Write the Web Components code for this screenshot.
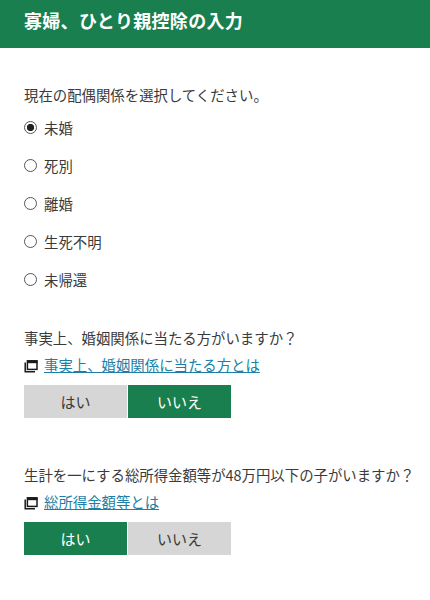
<!DOCTYPE html>
<html lang="ja">
<head>
<meta charset="utf-8">
<title>寡婦、ひとり親控除の入力</title>
<style>
  html, body { margin: 0; padding: 0; background: #fff; }
  body {
    font-family: "Noto Sans CJK JP", "Noto Sans", sans-serif;
    font-size: 14.4px;
    color: #3a3a3a;
  }
  main { display: block; padding: 0 8px 0 24px; }
</style>
</head>
<body>
<page-header>寡婦、ひとり親控除の入力</page-header>
<main>
  <radio-group prompt="現在の配偶関係を選択してください。" options="未婚,死別,離婚,生死不明,未帰還" selected="0"></radio-group>
  <yes-no prompt="事実上、婚姻関係に当たる方がいますか？" link="事実上、婚姻関係に当たる方とは" value="no" style="margin-top:38px"></yes-no>
  <yes-no prompt="生計を一にする総所得金額等が48万円以下の子がいますか？" link="総所得金額等とは" value="yes" style="margin-top:47px"></yes-no>
</main>
<script>
class PageHeader extends HTMLElement {
  constructor() {
    super();
    this.attachShadow({mode: 'open'}).innerHTML = `
      <style>
        :host {
          display: flex;
          align-items: center;
          height: 48px;
          padding: 0 24px 8px;
          box-sizing: border-box;
          background: #1a7f4e;
          color: #fff;
          font-size: 18px;
          font-weight: 700;
          letter-spacing: 0.3px;
        }
      </style>
      <slot></slot>`;
  }
}

class RadioGroup extends HTMLElement {
  constructor() {
    super();
    const root = this.attachShadow({mode: 'open'});
    const selected = Number(this.getAttribute('selected'));
    const items = this.getAttribute('options').split(',').map((name, i) => `
      <label>
        <input type="radio" name="g" ${i === selected ? 'checked' : ''}>
        <span>${name}</span>
      </label>`).join('');
    root.innerHTML = `
      <style>
        :host { display: block; padding-top: 37px; }
        p { margin: 0 0 12px; line-height: 20px; }
        .list { display: flex; flex-direction: column; gap: 18.2px; }
        label { display: flex; align-items: center; gap: 7px; height: 20px; }
        input {
          appearance: none;
          margin: 0;
          width: 13px;
          height: 13px;
          border: 1px solid #555;
          border-radius: 50%;
          box-sizing: border-box;
          background: #fff;
        }
        input:checked { background: radial-gradient(circle, #222 0 3.4px, #fff 3.9px); }
      </style>
      <p>${this.getAttribute('prompt')}</p>
      <div class="list">${items}</div>`;
  }
}

class YesNo extends HTMLElement {
  constructor() {
    super();
    const root = this.attachShadow({mode: 'open'});
    const value = this.getAttribute('value');
    root.innerHTML = `
      <style>
        :host { display: block; }
        p { margin: 0 0 7px; line-height: 20px; white-space: nowrap; }
        .help { display: flex; align-items: center; gap: 6px; height: 20px; margin-bottom: 10px; }
        svg { width: 14px; height: 14px; flex: none; margin-top: 3px; }
        a { color: #1b7fa6; text-decoration: underline; }
        .btns { display: flex; gap: 1px; }
        button {
          width: 103px;
          height: 33px;
          padding: 0;
          border: 0;
          font: inherit;
          font-size: 15px;
          background: #d6d6d6;
          color: #3a3a3a;
        }
        button.on { background: #1a7f4e; color: #fff; }
      </style>
      <p>${this.getAttribute('prompt')}</p>
      <div class="help">
        <svg viewBox="0 0 14 14" fill="none" stroke="#1a1a1a">
          <path d="M1.2 3.5V12.8H11" stroke-width="1.5"/>
          <rect x="3.4" y="1.8" width="9.6" height="8.6" stroke-width="1.5"/>
          <path d="M3 3H13.5" stroke-width="2.4"/>
        </svg>
        <a href="#">${this.getAttribute('link')}</a>
      </div>
      <div class="btns">
        <button class="${value === 'yes' ? 'on' : ''}">はい</button>
        <button class="${value === 'no' ? 'on' : ''}">いいえ</button>
      </div>`;
  }
}

customElements.define('page-header', PageHeader);
customElements.define('radio-group', RadioGroup);
customElements.define('yes-no', YesNo);
</script>
</body>
</html>
